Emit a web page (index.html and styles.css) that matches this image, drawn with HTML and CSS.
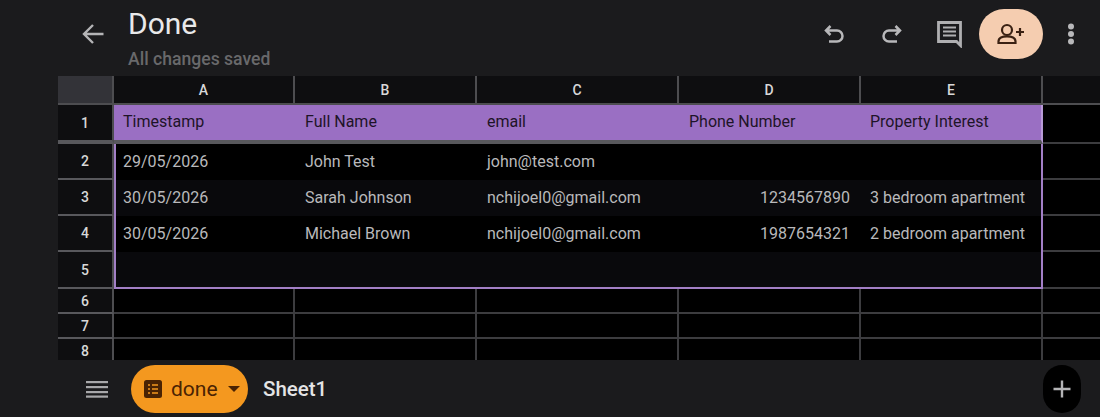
FILE: index.html
```html
<!DOCTYPE html>
<html lang="en">
<head>
    <meta charset="UTF-8">
    <title>Done</title>
    <link rel="stylesheet" href="styles.css">
</head>
<body>
    <!-- top bar -->
    <header class="topbar">
        <button class="back-btn" aria-label="Back">
            <svg width="24" height="24" viewBox="0 0 24 24" fill="none" stroke="#b4b4b6" stroke-width="2.4"><path d="M22.500 12H3M12 3l-9 9 9 9"/></svg>
        </button>
        <div class="title-block">
            <div class="doc-title">Done</div>
            <div class="doc-status">All changes saved</div>
        </div>
        <div class="top-actions">
            <svg class="undo" width="24" height="24" viewBox="0 0 24 24" fill="none" stroke="#b8b8ba" stroke-width="2.5"><path d="M8.500 4 4 8.500 8.500 13M4 8.500h11a5.500 5.500 0 0 1 0 11H7"/></svg>
            <svg class="redo" width="24" height="24" viewBox="0 0 24 24" fill="none" stroke="#b8b8ba" stroke-width="2.5"><path d="M15.500 4 20 8.500 15.500 13M20 8.500H9a5.500 5.500 0 0 0 0 11h8"/></svg>
            <svg class="comment" width="28" height="28" viewBox="0 0 28 28" fill="none" stroke="#b0b0b2" stroke-width="2.800"><path d="M2.500 2.500h22v23l-4-4H2.500z"/><path d="M7 7.500h13M7 11.500h13M7 15.500h13" stroke-width="2"/></svg>
            <button class="share-btn" aria-label="Share">
                <svg width="30" height="30" viewBox="0 0 30 30" fill="none" stroke="#3a2113" stroke-width="2.200"><circle cx="11" cy="11" r="5"/><path d="M2.500 24v-1.500c0-3.500 4-5.200 8.500-5.200s8.500 1.700 8.500 5.200V24zM20 13h8M24 9v8"/></svg>
            </button>
            <svg class="kebab" width="8" height="22" viewBox="0 0 8 22" fill="#b8b8ba"><circle cx="4" cy="3.500" r="3"/><circle cx="4" cy="11" r="3"/><circle cx="4" cy="18.500" r="3"/></svg>
        </div>
    </header>

    <!-- spreadsheet -->
    <main class="sheet">
        <div class="corner"></div>
        <div class="col-head">A</div>
        <div class="col-head">B</div>
        <div class="col-head">C</div>
        <div class="col-head">D</div>
        <div class="col-head">E</div>
        <div class="col-head col-rest"></div>

        <div class="row-head row-thick">1</div>
        <div class="cell head-cell first-text">Timestamp</div>
        <div class="cell head-cell">Full Name</div>
        <div class="cell head-cell">email</div>
        <div class="cell head-cell">Phone Number</div>
        <div class="cell head-cell head-last">Property Interest</div>
        <div class="cell rest-cell row-thick"></div>

        <div class="row-head">2</div>
        <div class="cell data first">29/05/2026</div>
        <div class="cell data">John Test</div>
        <div class="cell data">john@test.com</div>
        <div class="cell data"></div>
        <div class="cell data last"></div>
        <div class="cell rest-cell"></div>

        <div class="row-head">3</div>
        <div class="cell data stripe first">30/05/2026</div>
        <div class="cell data stripe">Sarah Johnson</div>
        <div class="cell data stripe">nchijoel0@gmail.com</div>
        <div class="cell data stripe num">1234567890</div>
        <div class="cell data stripe last">3 bedroom apartment</div>
        <div class="cell rest-cell"></div>

        <div class="row-head">4</div>
        <div class="cell data first">30/05/2026</div>
        <div class="cell data">Michael Brown</div>
        <div class="cell data">nchijoel0@gmail.com</div>
        <div class="cell data num">1987654321</div>
        <div class="cell data last">2 bedroom apartment</div>
        <div class="cell rest-cell"></div>

        <div class="row-head">5</div>
        <div class="cell data stripe first bottom"></div>
        <div class="cell data stripe bottom"></div>
        <div class="cell data stripe bottom"></div>
        <div class="cell data stripe bottom"></div>
        <div class="cell data stripe last bottom"></div>
        <div class="cell rest-cell"></div>

        <div class="row-head">6</div>
        <div class="cell"></div><div class="cell"></div><div class="cell"></div><div class="cell"></div><div class="cell"></div><div class="cell rest-cell"></div>
        <div class="row-head">7</div>
        <div class="cell"></div><div class="cell"></div><div class="cell"></div><div class="cell"></div><div class="cell"></div><div class="cell rest-cell"></div>
        <div class="row-head">8</div>
        <div class="cell"></div><div class="cell"></div><div class="cell"></div><div class="cell"></div><div class="cell"></div><div class="cell rest-cell"></div>
    </main>

    <!-- bottom bar -->
    <footer class="bottombar">
        <svg class="menu-icon" width="24" height="20" viewBox="0 0 24 20" fill="#a8a8aa"><rect x="1" y="2" width="22" height="2.200"/><rect x="1" y="7" width="22" height="2.200"/><rect x="1" y="12" width="22" height="2.200"/><rect x="1" y="16.500" width="22" height="2.200"/></svg>
        <div class="sheet-pill">
            <svg width="18" height="18" viewBox="0 0 18 18"><rect width="18" height="18" rx="2.500" fill="#4a2303"/><path d="M4 5h2M8 5h6M4 9h2M8 9h6M4 13h2M8 13h6" stroke="#f4981f" stroke-width="1.600"/></svg>
            <span class="pill-name">done</span>
            <span class="pill-caret"></span>
        </div>
        <div class="tab-name">Sheet1</div>
        <button class="add-btn" aria-label="Add sheet">
            <svg width="20" height="20" viewBox="0 0 20 20" stroke="#b4b4b6" stroke-width="2.400"><path d="M1.500 10h17M10 1.500v17"/></svg>
        </button>
    </footer>
</body>
</html>
```
FILE: styles.css
```css
html, body {
    margin: 0;
    padding: 0;
}
body {
    width: 1100px;
    height: 417px;
    overflow: hidden;
    background-color: #1b1b1d;
    font-family: Roboto, "Liberation Sans", sans-serif;
    color: #bdbdbf;
}
button {
    border: none;
    padding: 0;
    background: none;
}

/* top bar */
.topbar {
    height: 76px;
    display: flex;
    align-items: flex-start;
}
.back-btn {
    margin: 22px 0 0 81px;
    width: 24px;
    height: 24px;
    display: flex;
}
.title-block {
    margin-left: 23px;
}
.doc-title {
    margin-top: 6px;
    font-size: 30px;
    line-height: 36px;
    color: #e9e9ea;
}
.doc-status {
    margin-top: 7px;
    font-size: 17.6px;
    line-height: 20px;
    color: #69696b;
    font-weight: 500;
}
.top-actions {
    margin-left: auto;
    display: flex;
    align-items: center;
    height: 68px;
    padding-right: 25px;
}
.undo {
    margin-right: 34px;
}
.redo {
    margin-right: 32px;
}
.comment {
    margin-right: 15px;
}
.share-btn {
    width: 64px;
    height: 50px;
    border-radius: 25px;
    background-color: #f5cdb0;
    display: flex;
    align-items: center;
    justify-content: center;
    margin-right: 24px;
}

/* spreadsheet grid */
.sheet {
    margin-left: 58px;
    height: 284px;
    overflow: hidden;
    display: grid;
    grid-template-columns: 56px 181px 182px 202px 182px 182px 57px;
    grid-template-rows: 29px 39px 36px 36px 36px 37px 25px 25px 25px;
    background-color: #000;
    font-size: 16px;
}
.corner {
    background-color: #333338;
    border-right: 2px solid #4d4d50;
    border-bottom: 2px solid #4d4d50;
    box-sizing: border-box;
}
.col-head {
    background-color: #0e0e10;
    border-right: 2px solid #4d4d50;
    border-bottom: 2px solid #4d4d50;
    box-sizing: border-box;
    display: flex;
    align-items: center;
    justify-content: center;
    font-size: 14px;
    font-weight: 500;
    color: #d8d8d8;
}
.col-rest {
    border-right: none;
}
.row-head {
    background-color: #0e0e10;
    border-right: 2px solid #4d4d50;
    border-bottom: 2px solid #58585c;
    box-sizing: border-box;
    display: flex;
    align-items: center;
    justify-content: center;
    font-size: 14px;
    font-weight: 500;
    color: #d8d8d8;
}
.row-thick {
    border-bottom: 4px solid #58585c;
}
.cell {
    box-sizing: border-box;
    border-right: 2px solid #3c3c3f;
    border-bottom: 2px solid #3c3c3f;
    display: flex;
    align-items: center;
    padding: 0 10px;
    white-space: nowrap;
    overflow: hidden;
}
.rest-cell {
    border-right: none;
}
.head-cell {
    background-color: #9a6fc3;
    color: #1e1428;
    border-right: none;
    border-bottom: 4px solid #58585c;
    padding-bottom: 2px;
}
.first-text {
    padding-left: 9px;
}
.head-last {
    border-right: 2px solid #b79ad6;
    padding-left: 9px;
}
.data {
    border-right: none;
    border-bottom: none;
    color: #b9b9bb;
    background-color: #000;
    padding-bottom: 2px;
}
.stripe {
    background-color: #09090c;
}
.num {
    justify-content: flex-end;
    padding-right: 11px;
}
.first {
    border-left: 2px solid #a27fc6;
    padding-left: 7px;
}
.last {
    border-right: 2px solid #a27fc6;
    padding-left: 9px;
}
.bottom {
    border-bottom: 2px solid #a27fc6;
}

/* bottom bar */
.bottombar {
    height: 57px;
    display: flex;
    align-items: center;
}
.menu-icon {
    margin-left: 85px;
}
.sheet-pill {
    margin-left: 22px;
    width: 117px;
    height: 48px;
    border-radius: 24px;
    background-color: #f4981f;
    display: flex;
    align-items: center;
    box-sizing: border-box;
    padding-left: 13px;
}
.pill-name {
    margin-left: 9px;
    font-size: 21px;
    color: #4a2303;
}
.pill-caret {
    margin-left: 10px;
    width: 0;
    height: 0;
    border-left: 6px solid transparent;
    border-right: 6px solid transparent;
    border-top: 6px solid #4a2303;
}
.tab-name {
    margin-left: 15px;
    font-size: 20.5px;
    font-weight: 500;
    color: #e4e4e5;
}
.add-btn {
    margin-left: auto;
    margin-right: 19px;
    width: 38px;
    height: 48px;
    border-radius: 19px;
    background-color: #000;
    display: flex;
    align-items: center;
    justify-content: center;
}
```
